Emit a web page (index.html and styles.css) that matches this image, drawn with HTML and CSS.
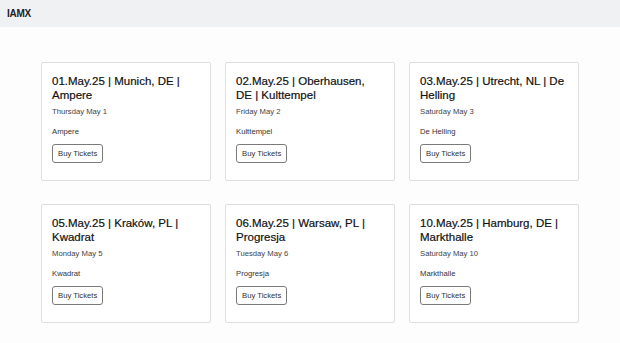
FILE: index.html
```html
<!DOCTYPE html>
<html lang="en">
<head>
    <meta charset="UTF-8">
    <meta name="viewport" content="width=device-width, initial-scale=1.0">
    <title>IAMX - Tour Dates</title>
    <link rel="stylesheet" href="styles.css">
</head>
<body>
    <header class="top-bar">
        <span class="brand">IAMX</span>
    </header>

    <main class="shows">
        <div class="show-card">
            <h3>01.May.25 | Munich, DE | Ampere</h3>
            <p class="show-date">Thursday May 1</p>
            <p class="show-venue">Ampere</p>
            <button class="btn">Buy Tickets</button>
        </div>
        <div class="show-card">
            <h3>02.May.25 | Oberhausen, DE | Kulttempel</h3>
            <p class="show-date">Friday May 2</p>
            <p class="show-venue">Kulttempel</p>
            <button class="btn">Buy Tickets</button>
        </div>
        <div class="show-card">
            <h3>03.May.25 | Utrecht, NL | De Helling</h3>
            <p class="show-date">Saturday May 3</p>
            <p class="show-venue">De Helling</p>
            <button class="btn">Buy Tickets</button>
        </div>
        <div class="show-card">
            <h3>05.May.25 | Kraków, PL | Kwadrat</h3>
            <p class="show-date">Monday May 5</p>
            <p class="show-venue">Kwadrat</p>
            <button class="btn">Buy Tickets</button>
        </div>
        <div class="show-card">
            <h3>06.May.25 | Warsaw, PL | Progresja</h3>
            <p class="show-date">Tuesday May 6</p>
            <p class="show-venue">Progresja</p>
            <button class="btn">Buy Tickets</button>
        </div>
        <div class="show-card">
            <h3>10.May.25 | Hamburg, DE | Markthalle</h3>
            <p class="show-date">Saturday May 10</p>
            <p class="show-venue">Markthalle</p>
            <button class="btn">Buy Tickets</button>
        </div>
    </main>
</body>
</html>
```

FILE: styles.css
```css
* {
    margin: 0;
    padding: 0;
    box-sizing: border-box;
    font-family: 'Liberation Sans', Arial, sans-serif;
}

body {
    background-color: #fdfdfd;
    overflow: hidden;
}

.top-bar {
    height: 27px;
    background-color: #f0f1f3;
    display: flex;
    align-items: center;
    padding-left: 7px;
}

.brand {
    font-size: 10px;
    font-weight: bold;
    color: #222;
    letter-spacing: -0.3px;
}

.shows {
    display: grid;
    grid-template-columns: repeat(3, 170px);
    column-gap: 14px;
    row-gap: 23px;
    justify-content: center;
    margin-top: 35px;
}

.show-card {
    background-color: white;
    border: 1px solid #dedede;
    border-radius: 2px;
    padding: 11px 11.5px 17px 10px;
}

.show-card h3 {
    font-size: 11.5px;
    line-height: 14px;
    font-weight: normal;
    color: #111;
    margin-bottom: 5px;
    -webkit-text-stroke: 0.2px #111;
}

.show-date {
    font-size: 7.7px;
    line-height: 9px;
    color: #444;
    margin-bottom: 11px;
}

.show-venue {
    font-size: 7.7px;
    line-height: 9px;
    color: #333;
    margin-bottom: 8px;
}

.btn {
    display: block;
    height: 19px;
    padding: 0 5px;
    background-color: white;
    border: 1px solid #7a7a7a;
    border-radius: 3px;
    font-size: 7.7px;
    color: #333;
    cursor: pointer;
}
```
